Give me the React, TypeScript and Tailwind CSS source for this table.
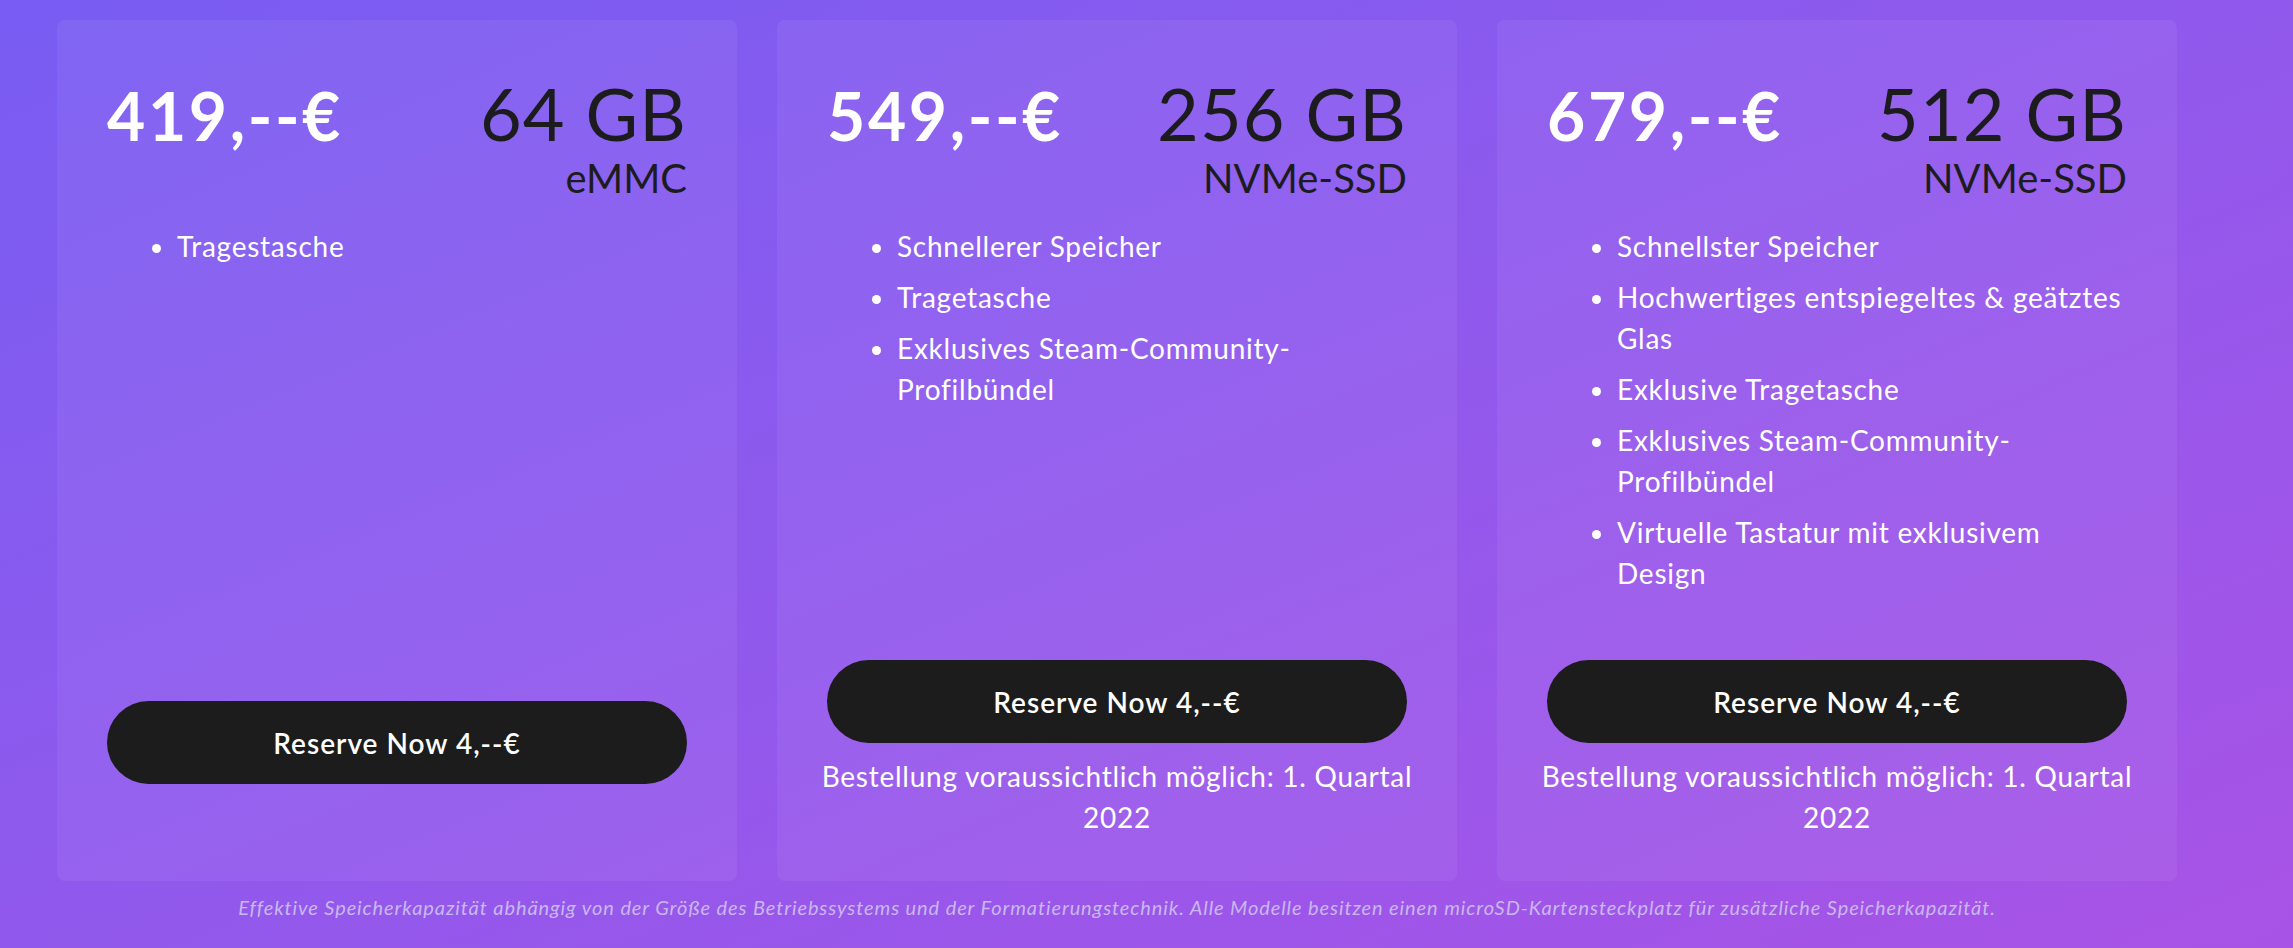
import React from "react";

type Plan = {
  price: string;
  size: string;
  storage: string;
  features: string[];
  note: string;
};

const plans: Plan[] = [
  {
    price: "419,--€",
    size: "64 GB",
    storage: "eMMC",
    features: ["Tragestasche"],
    note: "\u00a0",
  },
  {
    price: "549,--€",
    size: "256 GB",
    storage: "NVMe-SSD",
    features: [
      "Schnellerer Speicher",
      "Tragetasche",
      "Exklusives Steam-Community-Profilbündel",
    ],
    note: "Bestellung voraussichtlich möglich: 1. Quartal 2022",
  },
  {
    price: "679,--€",
    size: "512 GB",
    storage: "NVMe-SSD",
    features: [
      "Schnellster Speicher",
      "Hochwertiges entspiegeltes & geätztes Glas",
      "Exklusive Tragetasche",
      "Exklusives Steam-Community-Profilbündel",
      "Virtuelle Tastatur mit exklusivem Design",
    ],
    note: "Bestellung voraussichtlich möglich: 1. Quartal 2022",
  },
];

const PlanCard: React.FC<{ plan: Plan }> = ({ plan }) => {
  return (
    <div className="flex flex-col rounded-lg bg-white/[0.06] px-[50px] pt-[53px] pb-[43px]">
      <div className="flex items-baseline justify-between">
        <span className="text-[66px] font-bold leading-[80px] tracking-[2.6px] text-white">
          {plan.price}
        </span>
        <div className="flex flex-col items-end text-[#1c1c1e]">
          <span className="text-[72px] leading-[80px] tracking-[1.2px]">{plan.size}</span>
          <span className="text-[40px] leading-[50px]">{plan.storage}</span>
        </div>
      </div>

      <ul className="mt-[23px] mb-[66px] flex flex-1 list-outside list-disc flex-col gap-[10px] pl-[70px] text-[28px] leading-[41px] tracking-[0.75px] text-white">
        {plan.features.map((f) => (
          <li key={f}>{f}</li>
        ))}
      </ul>

      <button className="h-[83px] w-full rounded-full bg-[#1c1c1c] text-[28px] font-semibold tracking-[1px] text-white">
        Reserve Now 4,--€
      </button>
      <p className="-mx-[20px] mt-[13px] text-center text-[28px] leading-[41px] tracking-[0.75px] text-white">
        {plan.note}
      </p>
    </div>
  );
};

const App: React.FC = () => {
  return (
    <div className="min-h-screen bg-linear-to-br from-[#785cf3] to-[#a853e6] pt-[20px] pl-[57px] pr-[116px] font-[Lato,sans-serif]">
      <div className="grid grid-cols-3 gap-10">
        {plans.map((p) => (
          <PlanCard key={p.price} plan={p} />
        ))}
      </div>
      <p className="mt-[12px] text-center text-[20px] italic leading-[28px] tracking-[0.9px] text-[#c8b8f0]">
        Effektive Speicherkapazität abhängig von der Größe des Betriebssystems und der
        Formatierungstechnik. Alle Modelle besitzen einen microSD-Kartensteckplatz für
        zusätzliche Speicherkapazität.
      </p>
    </div>
  );
};

export default App;
